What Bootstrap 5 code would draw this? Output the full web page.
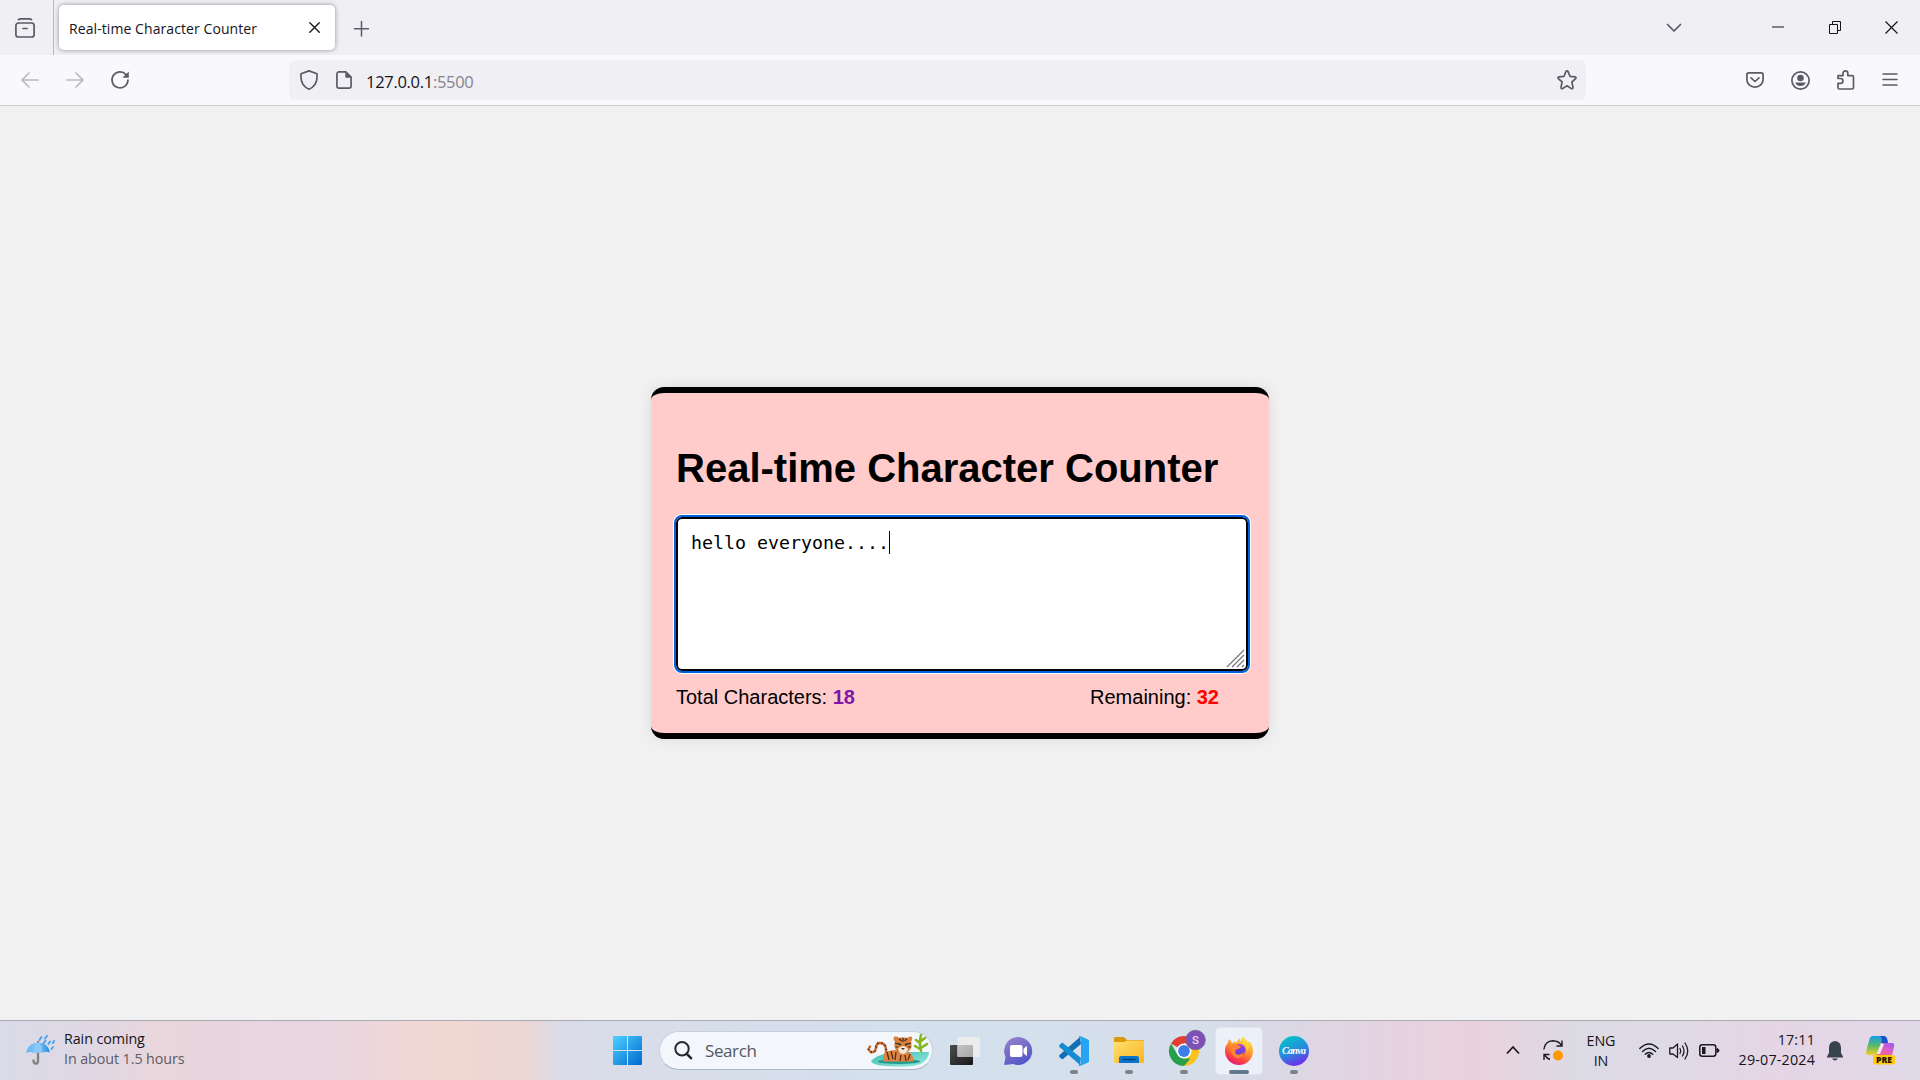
<!DOCTYPE html>
<html lang="en">
<head>
<meta charset="utf-8">
<title>Real-time Character Counter</title>
<meta name="viewport" content="width=device-width, initial-scale=1">
<link href="https://cdn.jsdelivr.net/npm/bootstrap@5.3.0/dist/css/bootstrap.min.css" rel="stylesheet">
<style>
body{height:1080px;background:#f1f1f1;font-family:"Open Sans","Noto Sans",sans-serif;color:#15141a;overflow:hidden}
svg{display:block;flex:none;overflow:visible}
.ln{fill:none;stroke:#5b5b66;stroke-width:1.7;stroke-linecap:round;stroke-linejoin:round}
.tabstrip{height:55px;background:#f0eff4}
.view-btn{width:54px;border-right:1px solid #b9b8c0}
.tab-active{width:276px;height:45px;margin:5px 0 0 5px;padding:0 15px 0 10px;border-radius:5px;background:#fff;box-shadow:0 0 5px rgba(0,0,0,.4)}
.tab-label{font-size:14px;letter-spacing:.08px;line-height:20px;padding-top:2px}
.toolbar{height:51px;background:#f9f9fb;border-bottom:1px solid #ccccd1}
.addr{width:1297px;height:40px;border-radius:6px;background:#f0eff4}
.addr-text{font-size:16.5px;letter-spacing:-.3px;line-height:24px;margin-left:14px;padding-top:4px}
.faint{color:#85848c}
.counter-card{width:618px;height:352px;border-top:6px solid #000;border-bottom:6px solid #000;border-radius:13px;background:#ffcccb;padding:0 21px 0 25px;box-shadow:0 0 13px rgba(0,0,0,.1);font-family:"Liberation Sans",Arial,sans-serif;color:#000}
.counter-title{font-size:40px;font-weight:700;line-height:46px;margin:52px 0 26px;white-space:nowrap}
.counter-box{width:572px;height:154px;border:2px solid #000;border-radius:6px;outline:2px solid #0060df;box-shadow:0 0 0 3px #fff;padding:12px 13px;font:18.3px/24px "DejaVu Sans Mono",monospace;color:#000;background:#fff;resize:none;display:block}
.caret{position:absolute;left:213px;top:14px;width:1px;height:23px;background:#000}
.grip{position:absolute;right:3px;bottom:3px}
.tally{width:543px;margin-top:14px;font-size:20px;line-height:24px}
.taskbar{height:60px;border-top:1px solid #adabb3;background:linear-gradient(90deg,#dadbe8 0,#dfd8e4 90px,#e8d6dc 150px,#e7d5e1 310px,#efd7d8 400px,#f1d8d1 445px,#ead6d5 530px,#d9dce8 562px,#d8dde9 640px,#d4e0ed 900px,#d5dfeb 1200px,#ddd7e5 1300px,#e6d3e1 1400px,#ead2dc 1480px,#dcdae4 1580px,#dedae6 1660px,#e5d5e5 1780px,#e0d9e8 1920px)}
.weather{width:613px;padding-left:26px;font-size:14.3px;line-height:20px}
.weather-text{margin:-3px 0 0 9px;letter-spacing:-.08px}
.weather .faded{color:#5d5b64}
.pill{width:274px;height:39px;margin:0 16px 0 17px;padding:0 2px 0 14px;border-radius:20px;background:#f3f6fb;border:1px solid #c6d0e0;border-bottom-color:#aab5c5}
.slot{width:55px;height:59px}
.slot-first{width:41px;margin-left:1px}
.slot .run{position:absolute;left:50%;bottom:6px;width:8px;height:4px;margin-left:-4px;border-radius:2px;background:#7d838b}
.slot .tile{width:48px;height:48px;border-radius:5px;background:#ecf0f8;border:1px solid #dfe4ee}
.slot .run.on{width:20px;margin-left:-10px;background:#5f7a8a}
.tray{font-size:14.3px;line-height:20px;padding-right:25px}
.clock{width:96px;letter-spacing:.18px;margin-top:-2px}
</style>
<script src="https://cdn.jsdelivr.net/npm/bootstrap@5.3.0/dist/js/bootstrap.bundle.min.js"></script>
</head>
<body class="d-flex flex-column m-0">

<header>
  <div class="tabstrip d-flex">
    <div class="view-btn d-flex align-items-center ps-3">
      <svg width="20" height="20" viewBox="0 0 20 20" style="margin-left:-1px"><g class="ln"><path d="M3.5 1.6Q4.300 .9 5.500 .9H14.500Q15.700 .9 16.500 1.600"/><rect x=".9" y="5" width="18.200" height="14" rx="2.500"/><path d="M8 10.500H12"/></g></svg>
    </div>
    <div class="tab-active d-flex align-items-center justify-content-between">
      <span class="tab-label">Real-time Character Counter</span>
      <svg width="11" height="11" viewBox="0 0 11 11"><path d="M.8 .8 10.300 10.300M10.300 .8 .8 10.300" stroke="#15141a" stroke-width="1.300" stroke-linecap="round"/></svg>
    </div>
    <div class="d-flex align-items-center" style="margin-left:19px"><svg width="15" height="15" viewBox="0 0 15 15"><path class="ln" d="M7.500 1.500V16M.5 8.800H14.500" style="stroke-width:1.500"/></svg></div>
    <div class="ms-auto d-flex align-items-center" style="padding-right:22px">
      <svg width="16" height="10" viewBox="0 0 16 10" style="margin-right:90px"><path class="ln" d="M1.500 1.500 8 8 14.500 1.500"/></svg>
      <svg width="12" height="10" viewBox="0 0 12 10" style="margin-right:45px"><path d="M0 4H12" stroke="#15141a"/></svg>
      <svg width="12" height="13" viewBox="0 0 12 13" style="margin-right:44px"><path d="M.5 3.500H8.500V12.500H.5ZM3.500 3.500V.5H11.500V9.500H8.500" fill="none" stroke="#15141a"/></svg>
      <svg width="13" height="13" viewBox="0 0 13 13"><path d="M.5 .5 12.500 12.500M12.500 .5 .5 12.500" stroke="#15141a" stroke-width="1.200"/></svg>
    </div>
  </div>
  <div class="toolbar d-flex align-items-center">
    <svg width="18" height="16" viewBox="0 0 18 16" style="margin-left:21px"><path class="ln" style="stroke:#b9b9c0" d="M17 8H1M8 1 1 8 8 15"/></svg>
    <svg width="18" height="16" viewBox="0 0 18 16" style="margin-left:27px"><path class="ln" style="stroke:#b9b9c0" d="M1 8H17M10 1 17 8 10 15"/></svg>
    <svg width="18" height="18" viewBox="0 0 18 18" style="margin-left:27px"><path class="ln" d="M15 3.600A8 8 0 1 0 17 9"/><path d="M17.800 .5V6.800H11.500Z" fill="#5b5b66"/></svg>
    <div class="addr d-flex align-items-center" style="margin-left:160px">
      <svg width="18" height="20" viewBox="0 0 18 20" style="margin-left:11px"><path class="ln" d="M9 .9 17 3.800V8Q16.500 16 9 19.200 1.500 16 1 8V3.800Z"/></svg>
      <svg width="16" height="18" viewBox="0 0 16 18" style="margin-left:18px"><path class="ln" d="M3 .9H9.800L15.100 6.200V15A2.100 2.100 0 0 1 13 17.100H3A2.100 2.100 0 0 1 .9 15V3A2.100 2.100 0 0 1 3 .9Z"/><path d="M9.300 .5V6.800H15.500Z" fill="#5b5b66"/></svg>
      <span class="addr-text">127.0.0.1<span class="faint">:5500</span></span>
      <svg class="ms-auto" width="20" height="20" viewBox="0 0 20 20" style="margin-right:9px"><path class="ln" d="M8.900 1.600Q10 .1 11.100 1.600L13 6.300 18 6.800Q19.700 7.200 18.600 8.600L14.900 12 16 17.300Q16 19.100 14.400 18.600L10 15.800 5.600 18.600Q4 19.100 4 17.300L5.100 12 1.400 8.600Q.3 7.200 2 6.800L7 6.300Z"/></svg>
    </div>
    <div class="ms-auto d-flex align-items-center" style="padding-right:22px">
      <svg width="18" height="16" viewBox="0 0 18 16" style="margin-right:27px"><path class="ln" d="M2.700 .9H15.300Q17.100 .9 17.100 2.700V7.500A8 7.600 0 0 1 .9 7.500V2.700Q.9 .9 2.700 .9ZM5 5.800 9 9.500 13 5.800"/></svg>
      <svg width="19" height="19" viewBox="0 0 19 19" style="margin-right:27px"><circle class="ln" cx="9.500" cy="9.500" r="8.600"/><circle cx="9.500" cy="7" r="3.300" fill="#5b5b66"/><path d="M4.200 11.500H14.800Q13.500 15 9.500 15T4.200 11.500Z" fill="#5b5b66"/></svg>
      <svg width="18" height="20" viewBox="0 0 18 20" style="margin-right:27px"><path class="ln" d="M1 8V5.600H6V3.200A2.400 2.400 0 0 1 10.800 3.200V5.600H15Q16.500 5.600 16.500 7V17.500Q16.500 19 15 19H2.400Q1 19 1 17.500V13.300H3.500A2.400 2.400 0 0 0 3.500 8.500H1Z"/></svg>
      <svg width="16" height="14" viewBox="0 0 16 14"><path class="ln" style="stroke-width:1.500" d="M1 1H15M1 6.500H15M1 12H15"/></svg>
    </div>
  </div>
</header>

<main class="flex-grow-1 d-flex align-items-center justify-content-center">
  <section class="counter-card">
    <h1 class="counter-title">Real-time Character Counter</h1>
    <div class="position-relative">
      <textarea class="counter-box" spellcheck="false">hello everyone....</textarea>
      <span class="caret"></span>
      <svg class="grip" width="18" height="18" viewBox="0 0 18 18"><path d="M0 17 17 0M5 17 17 5M10 17 17 10M15 17 17 15" stroke="#77777a" stroke-width="1.200"/></svg>
    </div>
    <div class="tally d-flex justify-content-between">
      <span>Total Characters: <b style="color:#8015a8">18</b></span>
      <span>Remaining: <b style="color:#f00">32</b></span>
    </div>
  </section>
</main>

<footer class="taskbar d-flex align-items-center">
  <div class="weather d-flex align-items-center">
    <svg width="29" height="30" viewBox="0 0 29 30" style="margin-top:-2px"><defs><linearGradient id="um"><stop stop-color="#62b4f2"/><stop offset=".5" stop-color="#86cbfa"/><stop offset="1" stop-color="#1e88e5"/></linearGradient></defs><path d="M12 7V26.500Q11.500 29 9.300 28.500 7.300 28 7.600 25.500" fill="none" stroke="#85817f" stroke-width="2.400" stroke-linecap="round"/><path d="M0 18Q2 7.500 12 7.500T24 17.500Q20 16 16.500 17.500 12 16.500 8 18 4 16 0 18Z" fill="url(#um)"/><path d="M8 18Q8 11 12 7.500 16 11 16.500 17.500" fill="#8ccaf5"/><path d="M13.500 5 15.500 2M19 3.500 21 .8M17.500 8.500 19.500 5.500M22.500 9 24 6.500M27 8 28 6M25.500 14 27 12" stroke="#4aa6ee" stroke-width="2" stroke-linecap="round"/></svg>
    <div class="weather-text"><div>Rain coming</div><div class="faded">In about 1.5 hours</div></div>
  </div>
  <svg width="29" height="29" viewBox="0 0 29 29"><defs><linearGradient id="wn" x2="1" y2="1"><stop stop-color="#4dd2ff"/><stop offset="1" stop-color="#0067cf"/></linearGradient></defs><path d="M1 0H14V14H0V1Q0 0 1 0ZM15 0H28Q29 0 29 1V14H15ZM0 15H14V29H1Q0 29 0 28ZM15 15H29V28Q29 29 28 29H15Z" fill="url(#wn)"/></svg>
  <div class="pill d-flex align-items-center">
    <svg width="18" height="19" viewBox="0 0 18 19"><circle cx="8" cy="7.800" r="6.700" fill="none" stroke="#252a30" stroke-width="2"/><path d="M12.800 12.800 17 17.200" stroke="#252a30" stroke-width="2.600" stroke-linecap="round"/></svg>
    <span style="margin-left:13px;font-size:17px;letter-spacing:-.4px;color:#55595f">Search</span>
    <svg class="ms-auto" width="63" height="33" viewBox="0 0 63 33">
      <defs><linearGradient id="wt" x2="1" y2="1"><stop stop-color="#3dbdb0"/><stop offset="1" stop-color="#9be8df"/></linearGradient></defs>
      <path d="M4 27Q12 18 38 18H62Q62 25 54 30 46 33 28 32.500 5 32 4 27Z" fill="url(#wt)"/>
      <ellipse cx="32" cy="27.500" rx="21" ry="2.500" fill="#23998e"/>
      <path d="M19 20Q20 8 12 9 9 10 9 14 8 19 4 18 0 16 3 12.500" fill="none" stroke="#c8692e" stroke-width="2.400" stroke-linecap="round"/>
      <path d="M19 20Q20 8 12 9 9 10 9 14 8 19 4 18 0 16 3 12.500" fill="none" stroke="#5b3020" stroke-width="2.400" stroke-dasharray="1 3"/>
      <path d="M16 27.500Q15 18 22 17L34 15 43 19Q47 22 46 27.500Z" fill="#df8440"/>
      <path d="M20 18 22 26M24 17 26 25M29 18 28 26M34 21 33 27M38 21 39 27M43 20 41 26" stroke="#532c1d" stroke-width="1.300"/>
      <path d="M28 8Q25 3 28 2.500 31 2 32 4 36 2.500 40 4 43 1.500 45 3 46 5 44 8 46 13 42 17L36 20 30 17Q26 13 28 8Z" fill="#d9813d"/>
      <path d="M31 15Q36 9 41 15L39 19 36 20 33 19Z" fill="#f3e7d8"/>
      <path d="M32 4.500 34.500 7M36 4V8M40 4.500 37.500 7M28 9 31 10M44 9 41 10M28.500 13 31 13M44 13 41 13" stroke="#45281c" stroke-width="1.200"/>
      <path d="M31 9.500 34 11M38 11 41 9.500" stroke="#263b28" stroke-width="1.600"/><path d="M34 14H38L36 16Z" fill="#593127"/>
      <g fill="none" stroke="#83b91f" stroke-width="2.600" stroke-linecap="round"><path d="M54 17Q52 9 54 1M53 15 48 12M53 9 49 6M54 14 60 10M54 7 58 4"/></g>
    </svg>
  </div>
  <div class="slot slot-first d-flex align-items-center"><svg width="30" height="28" viewBox="0 0 30 28"><defs><linearGradient id="tv" x2="1" y2="1"><stop stop-color="#4c4c4c"/><stop offset="1" stop-color="#191919"/></linearGradient><linearGradient id="tw" x2="1" y2="1"><stop stop-color="#c4c4c4"/><stop offset="1" stop-color="#a6a6a6"/></linearGradient></defs><rect y="8" width="23" height="20" rx="1" fill="url(#tv)"/><rect x="7.500" width="22.500" height="20" rx="1" fill="#ececec"/><rect x="7.500" y="8" width="15.500" height="12" fill="url(#tw)"/></svg></div>
  <div class="slot d-flex align-items-center justify-content-center"><svg width="29" height="28" viewBox="0 0 29 28"><defs><linearGradient id="ch" x2=".5" y2="1"><stop stop-color="#9d83ca"/><stop offset="1" stop-color="#5459c9"/></linearGradient></defs><path d="M14.500 0A14 14 0 1 1 9 27L.7 28Q0 28 .2 27L1.500 20A14 14 0 0 1 14.500 0Z" fill="url(#ch)"/><rect x="6" y="8" width="12.500" height="12" rx="2" fill="#fff"/><path d="M19.500 12 22 9.500Q23 9 23 10V18Q23 19 22 18.500L19.500 16Z" fill="#fff"/></svg></div>
  <div class="slot position-relative d-flex align-items-center justify-content-center"><svg width="30" height="30" viewBox="0 0 30 30"><path d="M21 1 22 8 4 23Q3 23.500 2 22.500L.5 21Q-.5 20 .5 19Z" fill="#0f70b7"/><path d="M21 29 22 22 4 7Q3 6.500 2 7.500L.5 9Q-.5 10 .5 11Z" fill="#168bd3"/><path d="M21 0 29 3.500Q30 4 30 5V25Q30 26 29 26.500L21 30Q19 30 20 28.500L22 27V3L20 1.500Q19.500 0 21 0Z" fill="#25a4f2"/></svg><i class="run"></i></div>
  <div class="slot position-relative d-flex align-items-center justify-content-center"><svg width="30" height="27" viewBox="0 0 30 27"><defs><linearGradient id="fo" x2="1" y2="1"><stop stop-color="#ffdf72"/><stop offset="1" stop-color="#fbb51c"/></linearGradient></defs><path d="M0 10V1Q0 0 1 0H10L13 3H29Q30 3 30 4V10Z" fill="#dc9a0b"/><path d="M0 5H10L13 3.500H29Q30 3.500 30 4.500V25Q30 26 29 26H1Q0 26 0 25Z" fill="url(#fo)"/><path d="M5 26V21Q5 19 7 19H23Q25 19 25 21V26Z" fill="#0b75c9"/><path d="M8.500 22.500H21.500" stroke="#083f78" stroke-width="1.300"/></svg><i class="run"></i></div>
  <div class="slot position-relative d-flex align-items-center justify-content-center"><svg width="30" height="30" viewBox="0 0 30 30"><path d="M15 15 2 7.500A15 15 0 0 1 28 7.500H15Z" fill="#e13d31"/><path d="M15 15V7.500H28A15 15 0 0 1 15 30Z" fill="#fcc31e"/><path d="M15 15 15 30A15 15 0 0 1 2 7.500L8.500 18.800 15 22.500H21.500L15 30Z" fill="#28a04b"/><circle cx="15" cy="15" r="7.500" fill="#fff"/><circle cx="15" cy="15" r="5.900" fill="#3d7de8"/><circle cx="26.500" cy="4" r="9.800" fill="#7c50b5" stroke="#6d6187" stroke-width=".7"/><text x="26.500" y="8" text-anchor="middle" font-family="Roboto,sans-serif" font-size="11.500" font-weight="500" fill="#e6d7f5">S</text></svg><i class="run"></i></div>
  <div class="slot position-relative d-flex align-items-center justify-content-center"><div class="tile d-flex align-items-center justify-content-center"><svg width="28" height="29" viewBox="0 0 28 29"><defs><linearGradient id="ff" x1=".8" y1="0" x2=".3" y2="1"><stop stop-color="#fff04a"/><stop offset=".45" stop-color="#ff982f"/><stop offset=".75" stop-color="#ff453f"/><stop offset="1" stop-color="#e5137f"/></linearGradient><linearGradient id="fp" x2="0" y2="1"><stop stop-color="#a13df0"/><stop offset="1" stop-color="#5842c4"/></linearGradient></defs><path d="M4.500 3 7 7Q9 5.500 12 6 13 3 15 2V6L18 0Q19.500 5 23 7L24 5Q28 9 28 15A14 14 0 1 1 0 15Q0 10 2.500 7.500 3 5 4.500 3Z" fill="url(#ff)"/><circle cx="14.500" cy="14" r="6" fill="url(#fp)"/><path d="M5 10Q9 7 12 9L16 10Q15 13 12 13 9 15 11 18 15 20 19 16 18 22 12 22 5 20 5 10Z" fill="#ff8332"/><path d="M17 7Q23 9 22 16 27 8 19 2Q16 4 17 7Z" fill="#ffd638"/></svg></div><i class="run on"></i></div>
  <div class="slot position-relative d-flex align-items-center justify-content-center"><svg width="30" height="30" viewBox="0 0 30 30"><defs><linearGradient id="cv" x1=".3" y1="0" x2=".7" y2="1"><stop stop-color="#06c4c8"/><stop offset=".5" stop-color="#258bdd"/><stop offset="1" stop-color="#7824ec"/></linearGradient></defs><circle cx="15" cy="15" r="15" fill="url(#cv)"/><text x="15" y="18" text-anchor="middle" font-family="Liberation Serif,serif" font-style="italic" font-weight="700" font-size="10" textLength="24" fill="#fff">Canva</text></svg><i class="run"></i></div>

  <div class="tray ms-auto d-flex align-items-center">
    <svg width="14" height="9" viewBox="0 0 14 9" style="margin-right:23px"><path d="M1 7.500 7 1 13 7.500" fill="none" stroke="#1b1b1f" stroke-width="1.800"/></svg>
    <svg width="20" height="21" viewBox="0 0 20 21"><path d="M.8 9.500Q2 1 10 .8 16 1 18.500 5.500M19 .5V6H13.500M7 19.500Q4 18.500 1.500 15M1 20V14.500H6.500" fill="none" stroke="#1b1b1f" stroke-width="1.400"/><circle cx="15" cy="15.500" r="5" fill="#ff9800"/></svg>
    <div class="text-center" style="width:76px;letter-spacing:-.1px">ENG<br>IN</div>
    <svg width="20" height="15" viewBox="0 0 20 15" style="margin-right:10px"><g fill="none" stroke="#1b1b1f" stroke-width="1.400" stroke-linecap="round"><path d="M.8 5.500Q10-3.500 19.200 5.500M3.500 8.500Q10 2 16.500 8.500M6.200 11.300Q10 7.500 13.800 11.300"/></g><circle cx="10" cy="13" r="1.900" fill="#1b1b1f"/></svg>
    <svg width="20" height="18" viewBox="0 0 20 18" style="margin-right:10px"><g fill="none" stroke="#1b1b1f" stroke-width="1.300" stroke-linecap="round" stroke-linejoin="round"><path d="M.8 6H4L8.500 2V15.500L4 12H.8ZM11 6.500Q12.500 9 11 11.500M13.500 4Q16.500 9 13.500 14M16 1Q21.500 9 16 17"/></g></svg>
    <svg width="20" height="13" viewBox="0 0 20 13"><rect x=".8" y=".8" width="16" height="11.400" rx="2.500" fill="none" stroke="#1b1b1f" stroke-width="1.500"/><rect x="3" y="3" width="3.500" height="7" fill="#1b1b1f"/><path d="M18 4.500Q20 5 20 6.500T18 8.500Z" fill="#1b1b1f" stroke="#1b1b1f"/></svg>
    <div class="clock text-end">17:11<br>29-07-2024</div>
    <svg width="16" height="20" viewBox="0 0 16 20" style="margin:0 23px 0 12px"><path d="M8 0Q14 .5 14 7V12L16 15.500V16.500H0V15.500L2 12V7Q2 .5 8 0ZM5 17.500H11Q10 19.500 8 19.500T5 17.500Z" fill="#36424e"/></svg>
    <svg width="29" height="29" viewBox="0 0 29 29"><defs><linearGradient id="ca" x2="0" y2="1"><stop stop-color="#159fe8"/><stop offset=".5" stop-color="#58b96a"/><stop offset="1" stop-color="#f6cf1c"/></linearGradient><linearGradient id="cb" x1="1" x2="0" y2="1"><stop stop-color="#9b55ef"/><stop offset=".5" stop-color="#e65fc0"/><stop offset="1" stop-color="#ff6a45"/></linearGradient></defs><path d="M7 0H18Q21 0 22 7H15L11 17Q10 19 7 19H3Q-1 19 0.500 14L3.500 3Q4.500 0 7 0Z" fill="url(#ca)"/><path d="M14 0H18Q21 0 22 7H15Q17 2 14 0Z" fill="#2051d0"/><path d="M18 7H26Q29 7 28 11L26 19H6Q10 20 12 17L15 9Q16 7 18 7Z" fill="url(#cb)"/><path d="M15 8H18L14 18H11Z" fill="#f3e8f5"/><rect x="7" y="19" width="22" height="9.500" rx="2.500" fill="#ffc90e"/><text x="18" y="26.800" text-anchor="middle" font-family="Open Sans,sans-serif" font-size="8.500" font-weight="800" textLength="16" fill="#1b1300">PRE</text></svg>
  </div>
</footer>
</body>
</html>
